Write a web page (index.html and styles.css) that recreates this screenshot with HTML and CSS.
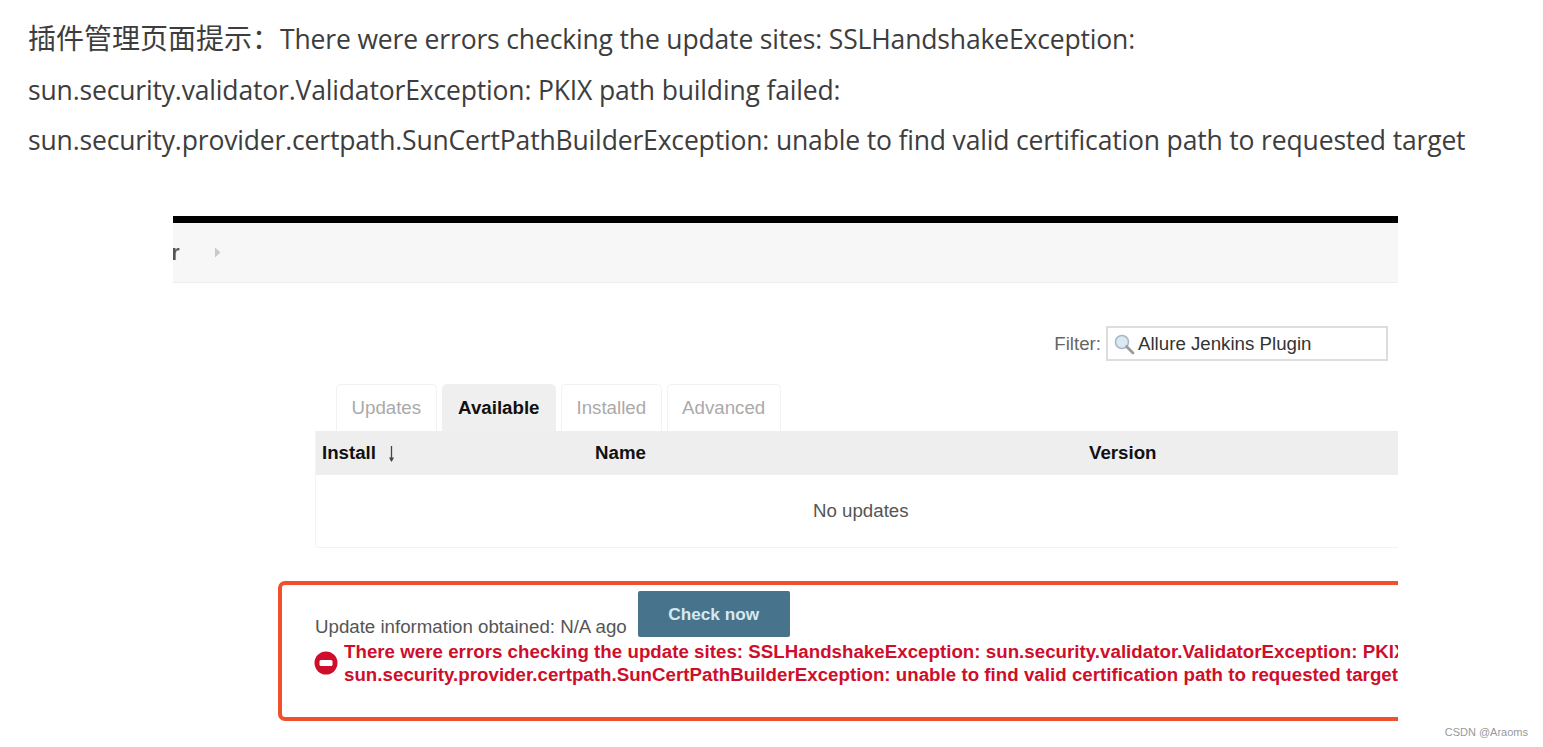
FILE: index.html
```html
<!DOCTYPE html>
<html lang="zh-CN">
<head>
<meta charset="utf-8">
<title>插件管理页面提示</title>
<link rel="stylesheet" href="styles.css">
</head>
<body>
<main class="article">
  <p class="line"><span class="cjk">插件管理页面提示：</span>There were errors checking the update sites: SSLHandshakeException:</p>
  <p class="line">sun.security.validator.ValidatorException: PKIX path building failed:</p>
  <p class="line">sun.security.provider.certpath.SunCertPathBuilderException: unable to find valid certification path to requested target</p>
  <figure class="shot">
    <div class="blackbar"></div>
    <div class="crumbs">
      <span class="crumb-letter">r</span>
      <svg class="crumb-arrow" width="7" height="11" viewBox="0 0 7 11"><path d="M1 0.5L6.500 5.500L1 10.500Z" fill="#c9c9c9"/></svg>
    </div>
    <div class="filter-row">
      <span class="filter-label">Filter:</span>
      <div class="filter-input">
        <svg class="search-icon" width="22" height="22" viewBox="0 0 22 22">
          <circle cx="9" cy="9" r="6.500" fill="#dbe9f3" stroke="#a9b8c4" stroke-width="1.600"/>
          <path d="M13.500 13.500L20 20" stroke="#9a9a9a" stroke-width="2.800" stroke-linecap="round"/>
        </svg>
        <span>Allure Jenkins Plugin</span>
      </div>
    </div>
    <div class="tabs">
      <span class="tab">Updates</span>
      <span class="tab tab-active">Available</span>
      <span class="tab">Installed</span>
      <span class="tab">Advanced</span>
    </div>
    <div class="table">
      <div class="thead">
        <span class="th th-install">Install
          <svg class="sort" width="9" height="18" viewBox="0 0 9 18"><path d="M4.500 1V16" stroke="#444" stroke-width="1.300"/><path d="M2 12.500L4.500 17L7 12.500Z" fill="#444"/></svg>
        </span>
        <span class="th th-name">Name</span>
        <span class="th">Version</span>
      </div>
      <div class="tbody">No updates</div>
    </div>
    <div class="errorbox">
      <div class="update-row">
        <span class="update-text">Update information obtained: N/A ago</span>
        <span class="check-btn">Check now</span>
      </div>
      <div class="error-row">
        <svg class="error-icon" width="24" height="24" viewBox="0 0 24 24">
          <circle cx="12" cy="12" r="11.500" fill="#cf0e2b"/>
          <rect x="5.500" y="9" width="13" height="6" rx="1.500" fill="#fff"/>
        </svg>
        <div class="error-text">There were errors checking the update sites: SSLHandshakeException: sun.security.validator.ValidatorException: PKIX<br>sun.security.provider.certpath.SunCertPathBuilderException: unable to find valid certification path to requested target</div>
      </div>
    </div>
  </figure>
</main>
<div class="watermark">CSDN @Araoms</div>
</body>
</html>
```

FILE: styles.css
```css
html, body {
  margin: 0;
  padding: 0;
  background: #fff;
  height: 747px;
  overflow: hidden;
}
.article {
  padding: 14.200px 0 0 28px;
  font-family: "Open Sans", "Noto Sans CJK SC", sans-serif;
  color: #3d3d3d;
}
.line {
  margin: 0;
  font-size: 26.500px;
  letter-spacing: -0.160px;
  line-height: 50.400px;
  height: 50.400px;
  white-space: nowrap;
}
.cjk {
  font-family: "Noto Sans CJK SC", sans-serif;
  font-size: 28px;
  letter-spacing: 0;
  line-height: 0;
}
.shot {
  margin: 35px 0 0 145px;
  padding-top: 16px;
  width: 1225px;
  height: 526px;
  box-sizing: border-box;
  overflow: hidden;
  font-family: "Liberation Sans", Arial, sans-serif;
  font-size: 18.700px;
  color: #333;
  background: #fff;
}
.blackbar {
  height: 7px;
  background: #000;
}
.crumbs {
  height: 59px;
  background: #f7f7f7;
  border-bottom: 1px solid #eee;
  display: flex;
  align-items: center;
  gap: 33px;
  font-weight: 700;
  color: #555;
}
.crumb-letter {
  margin-left: -2px;
  font-size: 22px;
  width: 10px;
}
.filter-row {
  display: flex;
  justify-content: flex-end;
  align-items: center;
  gap: 5px;
  margin-top: 43px;
  padding-right: 10px;
  color: #666;
}
.filter-input {
  width: 282px;
  height: 35px;
  box-sizing: border-box;
  border: 2px solid #ddd;
  display: flex;
  align-items: center;
  gap: 3px;
  padding-left: 5px;
  color: #333;
}
.tabs {
  display: flex;
  gap: 5px;
  margin: 23px 0 0 163px;
  height: 47px;
}
.tab {
  display: flex;
  align-items: center;
  padding: 0 14.500px;
  border: 1px solid #f2f2f2;
  border-bottom: 0;
  border-radius: 5px 5px 0 0;
  color: #aaa;
}
.tab-active {
  padding: 0 15.500px;
  background: #efefef;
  border-color: #efefef;
  color: #111;
  font-weight: 700;
}
.table {
  margin-left: 142px;
  width: 1100px;
  border: 1px solid #f2f2f2;
  border-top: 0;
  border-radius: 0 0 4px 4px;
}
.thead {
  display: flex;
  align-items: center;
  height: 44px;
  background: #eee;
  font-weight: 700;
  color: #111;
}
.th-install {
  width: 273px;
  padding-left: 6px;
  box-sizing: content-box;
  display: flex;
  align-items: center;
  gap: 11px;
}
.th-name {
  width: 494px;
}
.sort {
  flex-shrink: 0;
  margin-top: 2px;
}
.tbody {
  height: 72px;
  display: flex;
  align-items: center;
  padding-left: 497px;
  color: #555;
}
.errorbox {
  margin: 33px 0 0 105px;
  width: 1200px;
  height: 140px;
  box-sizing: border-box;
  border: 4px solid #f0502c;
  border-radius: 7px;
  padding: 6px 0 0 33px;
  white-space: nowrap;
}
.update-row {
  display: flex;
  align-items: flex-end;
  gap: 11px;
  height: 46px;
  color: #555;
}
.update-text {
  line-height: 20px;
}
.check-btn {
  width: 152px;
  height: 46px;
  background: #47748c;
  border-radius: 2px;
  display: flex;
  align-items: center;
  justify-content: center;
  color: #d8e8f0;
  font-size: 17.200px;
  font-weight: 700;
}
.error-row {
  display: flex;
  align-items: center;
  gap: 6px;
  margin: 3px 0 0 -1px;
}
.error-icon {
  flex-shrink: 0;
}
.error-text {
  color: #cf0e2b;
  font-weight: 700;
  line-height: 23px;
  letter-spacing: 0.030px;
}
.watermark {
  position: absolute;
  right: 15px;
  top: 726px;
  font-family: "Liberation Sans", Arial, sans-serif;
  font-size: 11px;
  color: #999;
}
```
